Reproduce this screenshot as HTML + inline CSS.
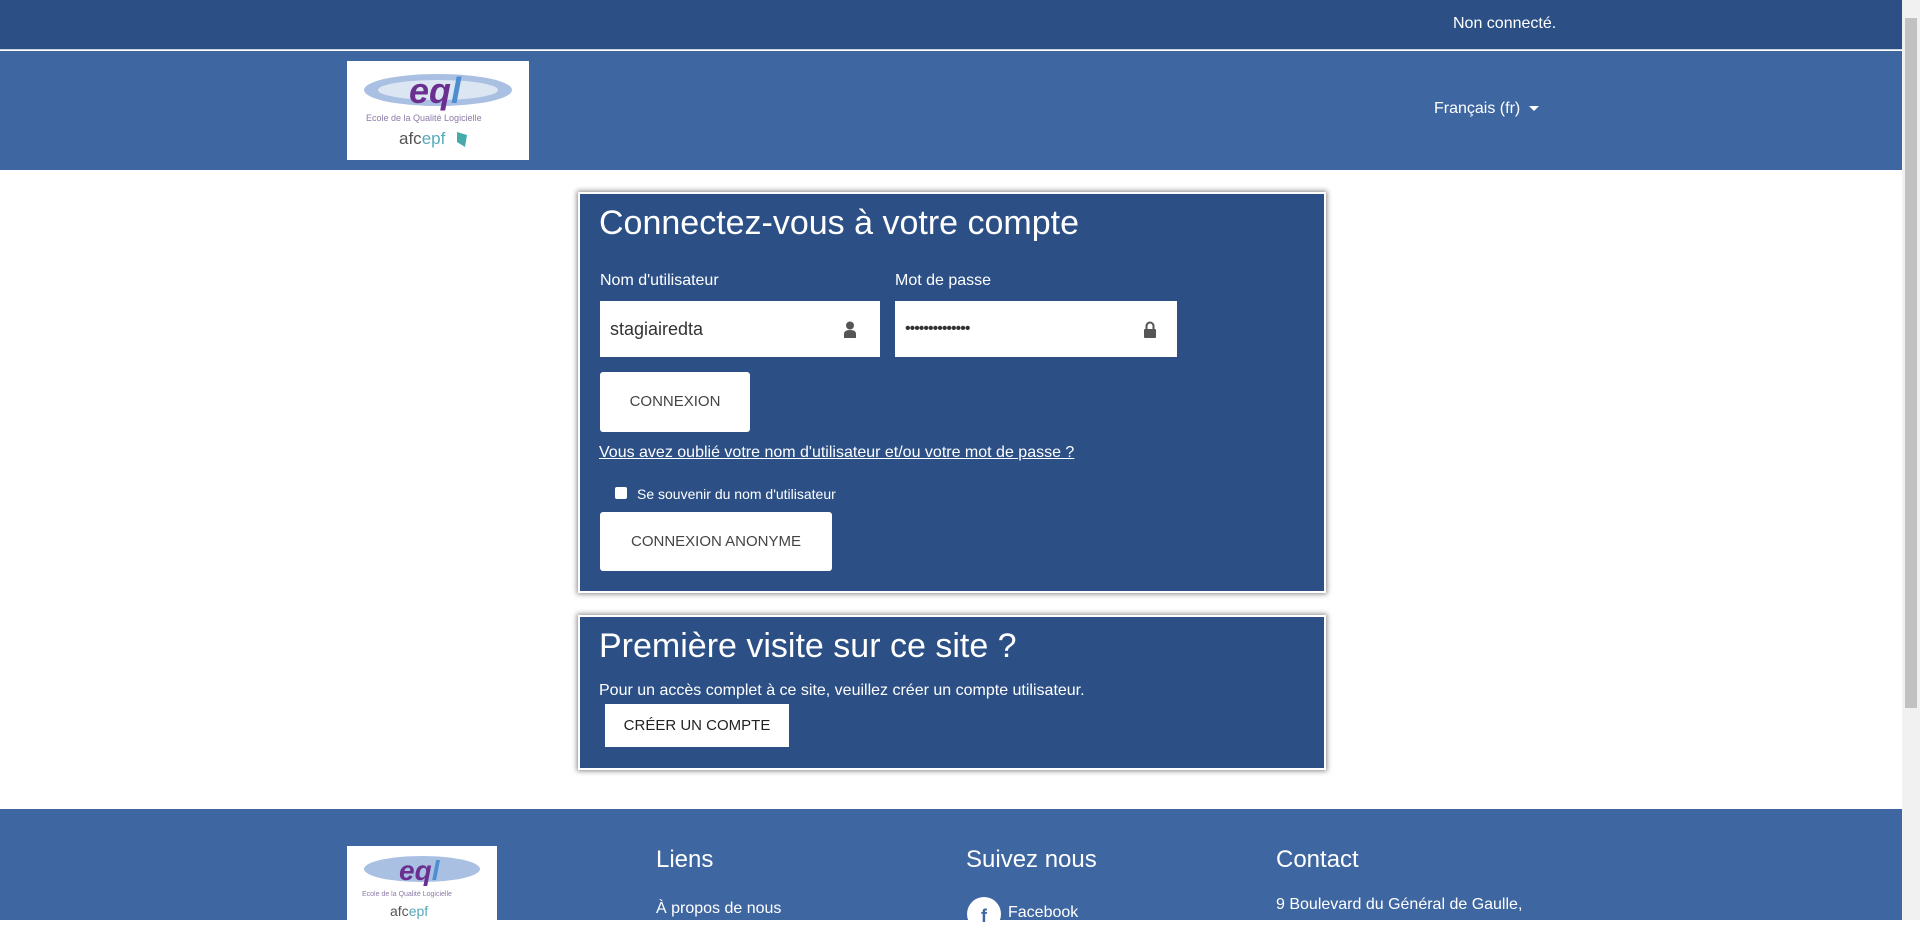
<!DOCTYPE html>
<html><head><meta charset="utf-8"><style>
*{box-sizing:border-box;margin:0;padding:0}
body{width:1920px;height:920px;overflow:hidden;background:#fff;font-family:"Liberation Sans",sans-serif;position:relative;color:#fff}
.abs{position:absolute}
.top{left:0;top:0;width:1902px;height:50px;background:#2c5086;border-bottom:1px solid #c8d3e3}
.hdr{left:0;top:51px;width:1902px;height:119px;background:#3e66a1}
.logo{background:#fff;overflow:hidden}
.card{background:#2c5086;box-shadow:0 0 0 2px #fff,0 0 5px 3px #888}
.inp{background:#fff;color:#333;font-size:18px;padding-left:10px;line-height:56px}
.btn{background:#fff;color:#444;border-radius:3px;text-align:center}
.foot{left:0;top:809px;width:1902px;height:111px;background:#3e66a1}
.sb{left:1902px;top:0;width:18px;height:920px;background:#f1f1f1}
</style></head><body>
<div class="abs top"></div>
<div class="abs" style="left:1453px;top:15px;font-size:16px">Non connecté.</div>
<div class="abs hdr"></div>
<div class="abs logo" style="left:347px;top:61px;width:182px;height:99px">
<svg width="182" height="99"><ellipse cx="91" cy="29" rx="74" ry="16" fill="#a9c0e3"/><ellipse cx="91" cy="29" rx="60" ry="10" fill="#dce6f3"/>
<text x="62" y="42" font-family="Liberation Sans" font-weight="bold" font-style="italic" font-size="36" fill="#6a2f8f">eq<tspan fill="#4e8ed0">l</tspan></text>
<text x="19" y="60" font-family="Liberation Sans" font-size="9" fill="#8c7aa8">Ecole de la Qualité Logicielle</text>
<text x="52" y="83" font-family="Liberation Sans" font-size="17" fill="#555">afc<tspan fill="#5ab">epf</tspan></text>
<path d="M110 71 l10 3 l-2 12 l-8 -5z" fill="#4aa"/></svg></div>
<div class="abs" style="left:1434px;top:100px;font-size:16px">Français (fr) <span style="display:inline-block;border-left:5px solid transparent;border-right:5px solid transparent;border-top:5px solid #fff;vertical-align:middle;margin-left:4px"></span></div>

<div class="abs card" style="left:580px;top:194px;width:744px;height:397px"></div>
<div class="abs" style="left:599px;top:204px;font-size:34px">Connectez-vous à votre compte</div>
<div class="abs" style="left:600px;top:272px;font-size:16px">Nom d'utilisateur</div>
<div class="abs" style="left:895px;top:272px;font-size:16px">Mot de passe</div>
<div class="abs inp" style="left:600px;top:301px;width:280px;height:56px">stagiairedta
<svg class="abs" style="left:243px;top:20px" width="14" height="17"><circle cx="7" cy="4.5" r="4" fill="#555"/><path d="M1 17 v-4 q0-4 6-4 q6 0 6 4 v4z" fill="#555"/></svg></div>
<div class="abs inp" style="left:895px;top:301px;width:282px;height:56px;letter-spacing:-1px;font-size:16px">••••••••••••••
<svg class="abs" style="left:248px;top:20px" width="14" height="17"><path d="M3.5 8 v-3 a3.5 3.5 0 0 1 7 0 v3" stroke="#555" stroke-width="2" fill="none"/><rect x="1" y="8" width="12" height="9" rx="1" fill="#555"/></svg></div>
<div class="abs btn" style="left:600px;top:372px;width:150px;height:60px;line-height:60px;font-size:15px">CONNEXION</div>
<div class="abs" style="left:599px;top:444px;font-size:16px;text-decoration:underline">Vous avez oublié votre nom d'utilisateur et/ou votre mot de passe ?</div>
<div class="abs" style="left:615px;top:487px;width:12px;height:12px;background:#fff;border-radius:2px"></div>
<div class="abs" style="left:637px;top:486px;font-size:14px">Se souvenir du nom d'utilisateur</div>
<div class="abs btn" style="left:600px;top:512px;width:232px;height:59px;line-height:59px;font-size:15px">CONNEXION ANONYME</div>

<div class="abs card" style="left:580px;top:617px;width:744px;height:151px"></div>
<div class="abs" style="left:599px;top:627px;font-size:34px">Première visite sur ce site ?</div>
<div class="abs" style="left:599px;top:682px;font-size:16px">Pour un accès complet à ce site, veuillez créer un compte utilisateur.</div>
<div class="abs btn" style="left:605px;top:704px;width:184px;height:43px;line-height:43px;font-size:15px;border-radius:0;color:#222">CRÉER UN COMPTE</div>

<div class="abs foot"></div>
<div class="abs logo" style="left:347px;top:846px;width:150px;height:74px">
<svg width="150" height="74"><ellipse cx="75" cy="23" rx="58" ry="13" fill="#a9c0e3"/>
<text x="52" y="34" font-family="Liberation Sans" font-weight="bold" font-style="italic" font-size="28" fill="#6a2f8f">eq<tspan fill="#4e8ed0">l</tspan></text>
<text x="15" y="50" font-family="Liberation Sans" font-size="7" fill="#8c7aa8">Ecole de la Qualité Logicielle</text>
<text x="43" y="70" font-family="Liberation Sans" font-size="14" fill="#555">afc<tspan fill="#5ab">epf</tspan></text></svg></div>
<div class="abs" style="left:656px;top:846px;font-size:24px">Liens</div>
<div class="abs" style="left:966px;top:846px;font-size:24px">Suivez nous</div>
<div class="abs" style="left:1276px;top:846px;font-size:24px">Contact</div>
<div class="abs" style="left:656px;top:900px;font-size:16px">À propos de nous</div>
<div class="abs" style="left:967px;top:897px;width:34px;height:34px;border-radius:50%;background:#fff;color:#3e66a1;font-weight:bold;text-align:center;line-height:38px;font-size:18px">f</div>
<div class="abs" style="left:1008px;top:904px;font-size:16px">Facebook</div>
<div class="abs" style="left:1276px;top:896px;font-size:16px">9 Boulevard du Général de Gaulle,</div>
<div class="abs sb"><div class="abs" style="left:3px;top:18px;width:12px;height:690px;background:#c1c1c1"></div></div>
</body></html>
